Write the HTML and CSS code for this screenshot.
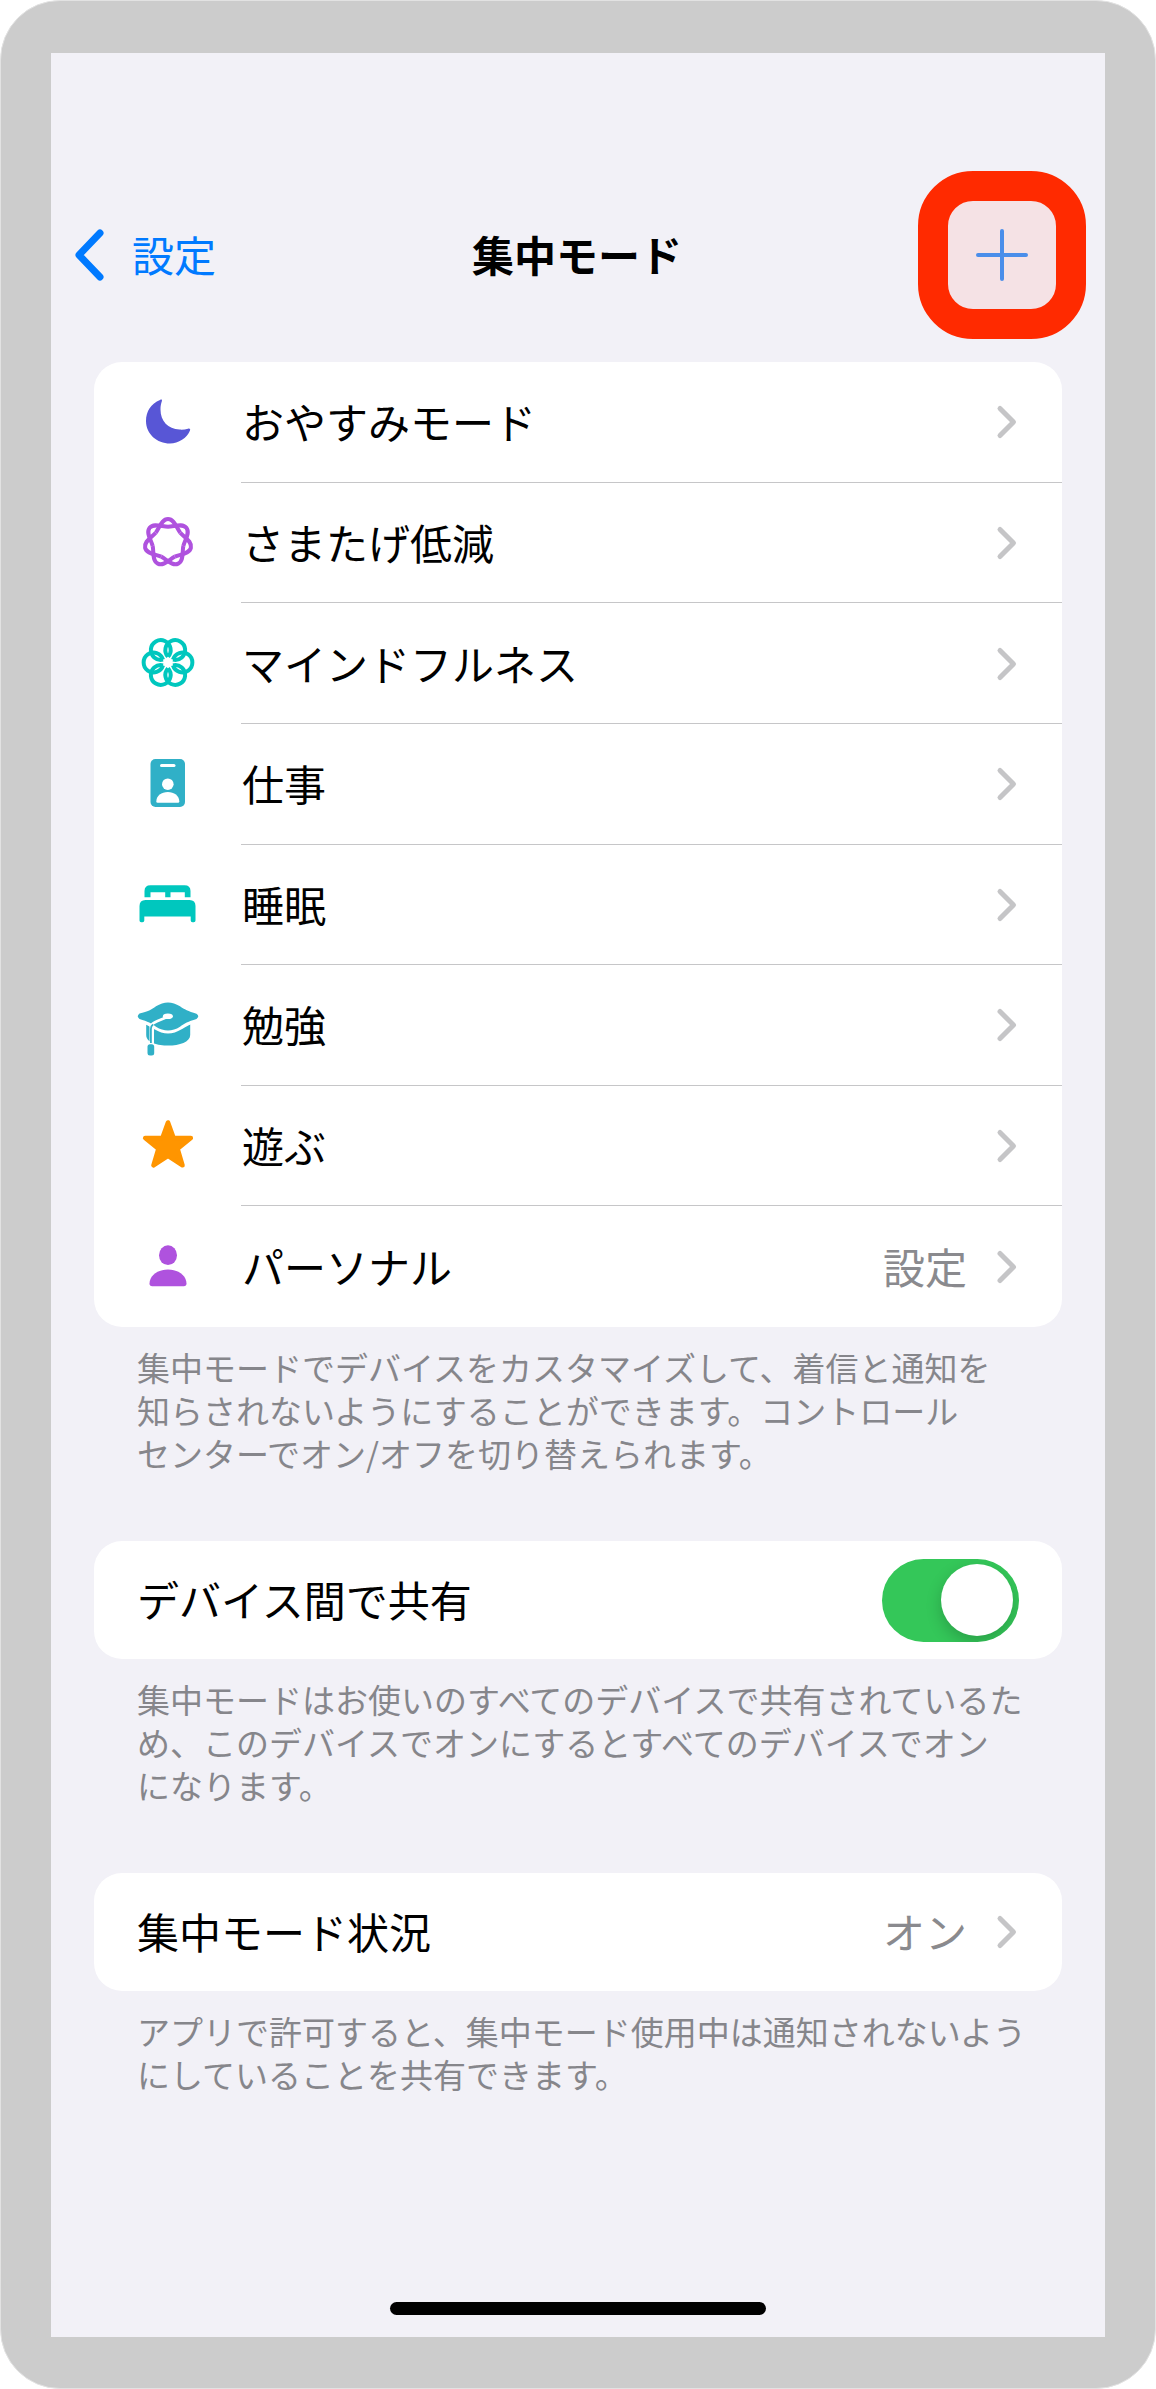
FILE: index.html
```html
<!DOCTYPE html>
<html lang="ja">
<head>
<meta charset="utf-8">
<meta name="viewport" content="width=device-width, initial-scale=1">
<title>集中モード</title>
<link rel="stylesheet" href="styles.css">
</head>
<body>
<svg class="defs" aria-hidden="true">
  <symbol id="chevron" viewBox="0 0 24 36">
    <path d="M5 4.500L18.500 18L5 31.500" fill="none" stroke="currentColor" stroke-width="5" stroke-linecap="round" stroke-linejoin="round"/>
  </symbol>
</svg>
<div class="device">
  <div class="screen">
    <header class="nav">
      <a class="back" href="#settings">
        <svg class="back-icon" viewBox="0 0 30 52" aria-hidden="true"><path d="M26 4L5 26L26 48" fill="none" stroke="currentColor" stroke-width="7" stroke-linecap="round" stroke-linejoin="round"/></svg>
        <span class="text">設定</span>
      </a>
      <h1 class="title text">集中モード</h1>
      <button class="add" type="button" aria-label="追加">
        <svg class="add-icon" viewBox="0 0 52 52" aria-hidden="true"><path d="M26 2V50M2 26H50" fill="none" stroke="currentColor" stroke-width="4" stroke-linecap="round"/></svg>
      </button>
    </header>

    <main class="content">
      <section class="section">
        <ul class="card modes">
          <li class="mode"><a class="row" href="#sleep-mode">
            <svg class="icon indigo" viewBox="0 0 64 64" aria-hidden="true"><path d="M24 10C15 13.500 10 21.500 10 31C10 44 21 53.500 34 53.500C42.500 53.500 51 48 54 40.500C54.600 38.900 53.600 38.200 52 38.700C49.500 39.500 46.500 39.800 43.500 39.600C32 39 24.500 31 24.500 19.500C24.500 16 25 13.500 25.900 11C26.300 9.400 25.300 9.200 24 10Z"/></svg>
            <span class="label text">おやすみモード</span>
            <svg class="chevron"><use href="#chevron"/></svg>
          </a></li>
          <li class="mode"><a class="row" href="#reduce">
            <svg class="icon purple" viewBox="0 0 64 64" aria-hidden="true">
              <g transform="translate(32 31.500)" class="line">
                <path d="M-12.300 -9.800C-8.600 -14.500 -6.500 -23.500 0 -23.500C6.500 -23.500 8.600 -14.500 12.300 -9.800"/>
                <path d="M-12.300 -9.800C-8.600 -14.500 -6.500 -23.500 0 -23.500C6.500 -23.500 8.600 -14.500 12.300 -9.800" transform="rotate(51.430)"/>
                <path d="M-12.300 -9.800C-8.600 -14.500 -6.500 -23.500 0 -23.500C6.500 -23.500 8.600 -14.500 12.300 -9.800" transform="rotate(102.860)"/>
                <path d="M-12.300 -9.800C-8.600 -14.500 -6.500 -23.500 0 -23.500C6.500 -23.500 8.600 -14.500 12.300 -9.800" transform="rotate(154.290)"/>
                <path d="M-12.300 -9.800C-8.600 -14.500 -6.500 -23.500 0 -23.500C6.500 -23.500 8.600 -14.500 12.300 -9.800" transform="rotate(205.710)"/>
                <path d="M-12.300 -9.800C-8.600 -14.500 -6.500 -23.500 0 -23.500C6.500 -23.500 8.600 -14.500 12.300 -9.800" transform="rotate(257.140)"/>
                <path d="M-12.300 -9.800C-8.600 -14.500 -6.500 -23.500 0 -23.500C6.500 -23.500 8.600 -14.500 12.300 -9.800" transform="rotate(308.570)"/>
              </g>
            </svg>
            <span class="label text">さまたげ低減</span>
            <svg class="chevron"><use href="#chevron"/></svg>
          </a></li>
          <li class="mode"><a class="row" href="#mindfulness">
            <svg class="icon mint" viewBox="0 0 64 64" aria-hidden="true">
              <g transform="translate(32 30.500)" class="line">
                <path d="M-2.900 -5A9.900 9.900 0 1 1 2.900 -5" transform="rotate(30)"/>
                <path d="M-2.900 -5A9.900 9.900 0 1 1 2.900 -5" transform="rotate(90)"/>
                <path d="M-2.900 -5A9.900 9.900 0 1 1 2.900 -5" transform="rotate(150)"/>
                <path d="M-2.900 -5A9.900 9.900 0 1 1 2.900 -5" transform="rotate(210)"/>
                <path d="M-2.900 -5A9.900 9.900 0 1 1 2.900 -5" transform="rotate(270)"/>
                <path d="M-2.900 -5A9.900 9.900 0 1 1 2.900 -5" transform="rotate(330)"/>
              </g>
            </svg>
            <span class="label text">マインドフルネス</span>
            <svg class="chevron"><use href="#chevron"/></svg>
          </a></li>
          <li class="mode"><a class="row" href="#work">
            <svg class="icon teal" viewBox="0 0 64 64" aria-hidden="true">
              <rect x="14.500" y="7" width="34.500" height="48" rx="5"/>
              <g fill="#fff"><rect x="24" y="12" width="15.500" height="3" rx="1.500"/><circle cx="31.800" cy="32.200" r="5.800"/><path d="M20.300 49.500C20.300 43.500 25.500 39.900 31.800 39.900S43.300 43.500 43.300 49.500Q43.300 50.800 42 50.800H21.600Q20.300 50.800 20.300 49.500Z"/></g>
            </svg>
            <span class="label text">仕事</span>
            <svg class="chevron"><use href="#chevron"/></svg>
          </a></li>
          <li class="mode"><a class="row" href="#sleep">
            <svg class="icon mint" viewBox="0 0 64 64" aria-hidden="true">
              <path d="M8.500 24.200V18Q8.500 12.200 14.500 12.200H48.500Q54.500 12.200 54.500 18V24.200H48.800V19.200H34.500V24.200H29.200V19.200H14.500V24.200Z"/>
              <path d="M9.500 26.900H53.500Q59.500 26.900 59.500 33V47.500Q59.500 49.300 57.800 49.300H56.500Q54.700 49.300 54.700 47.500V43.500H8.300V47.500Q8.300 49.300 6.500 49.300H5.200Q3.500 49.300 3.500 47.500V33Q3.500 26.900 9.500 26.900Z"/>
            </svg>
            <span class="label text">睡眠</span>
            <svg class="chevron"><use href="#chevron"/></svg>
          </a></li>
          <li class="mode"><a class="row" href="#study">
            <svg class="icon teal" viewBox="0 0 64 64" aria-hidden="true">
              <path d="M10.200 28H54.200V42C54.200 49 43.500 52.600 32 52.600C22 52.600 10.200 50 10.200 42Z"/>
              <path d="M13.500 32H18V54H13.500Z" fill="#fff"/>
              <path d="M3.500 20.500C12 18.500 15.500 16.500 20 13.200Q32 5.600 44 13.200C48.500 16.500 52 18 60.500 20.700Q64 23.300 60.500 26C52 28.500 48.500 30.500 44 33.800Q32 41.300 20 33.800C15.500 30.500 12 28.500 3.500 26Q0 23.300 3.500 20.500Z" stroke="#fff" stroke-width="6" paint-order="stroke"/>
              <path d="M30 24.500L21 28.200Q16 30.300 14.500 33" fill="none" stroke="#fff" stroke-width="2.600"/>
              <ellipse cx="31.900" cy="23.300" rx="5" ry="2.800" fill="#fff"/>
              <path d="M17 31.500Q14.900 33 14.900 36V53" fill="none" stroke="currentColor" stroke-width="1.800"/>
              <rect x="10.500" y="50" width="8.700" height="14" rx="4" fill="#fff"/>
              <rect x="11.500" y="51.300" width="6.700" height="11.300" rx="2.500"/>
            </svg>
            <span class="label text">勉強</span>
            <svg class="chevron"><use href="#chevron"/></svg>
          </a></li>
          <li class="mode"><a class="row" href="#play">
            <svg class="icon orange" viewBox="0 0 64 64" aria-hidden="true"><path d="M32 8.500L37.600 24H54.800L41.600 34.800L46.500 51.300L32 41.800L17.500 51.300L22.400 34.800L9.200 24H26.400Z" stroke="currentColor" stroke-width="4.600" stroke-linejoin="round"/></svg>
            <span class="label text">遊ぶ</span>
            <svg class="chevron"><use href="#chevron"/></svg>
          </a></li>
          <li class="mode"><a class="row" href="#personal">
            <svg class="icon purple" viewBox="0 0 64 64" aria-hidden="true"><ellipse cx="32" cy="20.200" rx="9" ry="9.900"/><path d="M13.500 48.500C13.500 41 21 34.600 32 34.600S50.500 41 50.500 48.500Q50.500 51.300 47.800 51.300H16.200Q13.500 51.300 13.500 48.500Z"/></svg>
            <span class="label text">パーソナル</span>
            <span class="value text">設定</span>
            <svg class="chevron"><use href="#chevron"/></svg>
          </a></li>
        </ul>
        <p class="note">集中モードでデバイスをカスタマイズして、着信と通知を<br>知らされないようにすることができます。コントロール<br>センターでオン/オフを切り替えられます。</p>
      </section>

      <section class="section">
        <div class="card plain">
          <label class="label text" for="share">デバイス間で共有</label>
          <input class="switch" id="share" type="checkbox" role="switch" checked>
        </div>
        <p class="note">集中モードはお使いのすべてのデバイスで共有されているた<br>め、このデバイスでオンにするとすべてのデバイスでオン<br>になります。</p>
      </section>

      <section class="section">
        <a class="card plain" href="#status">
          <span class="label text">集中モード状況</span>
          <span class="value text">オン</span>
          <svg class="chevron"><use href="#chevron"/></svg>
        </a>
        <p class="note">アプリで許可すると、集中モード使用中は通知されないよう<br>にしていることを共有できます。</p>
      </section>
    </main>
    <div class="home-bar"></div>
  </div>
</div>
</body>
</html>
```
FILE: styles.css
```css
* {
  box-sizing: border-box;
}

body {
  margin: 0;
  background: #fff;
  color: #000;
  font-family: "Noto Sans CJK JP", "Liberation Sans", sans-serif;
  font-size: 42px;
  line-height: 60px;
}

a {
  color: inherit;
  text-decoration: none;
}

.defs {
  display: none;
}

.device {
  display: flex;
  min-height: 100vh;
  padding: 52px 50px 51px;
  border: 1px solid #e2e2e2;
  border-radius: 60px;
  background: #ccc;
}

.screen {
  flex: 1;
  display: flex;
  flex-direction: column;
  padding-top: 118px;
  background: #f2f1f7;
}

.nav {
  display: grid;
  grid-template-columns: 1fr auto 1fr;
  align-items: center;
  padding: 0 19px 0 17px;
}

.back {
  display: flex;
  align-items: center;
  gap: 28px;
  padding-left: 6px;
  color: #007aff;
}

.back-icon {
  width: 30px;
  height: 52px;
}

.title {
  margin: 0;
  font-size: 42px;
  font-weight: 700;
}

.text {
  padding-bottom: 2px;
}

.add {
  justify-self: end;
  display: grid;
  place-items: center;
  width: 168px;
  height: 168px;
  padding: 0;
  border: 30px solid #ff2a00;
  border-radius: 55px;
  background: #f5e2e5;
  color: #4a8eea;
}

.add-icon {
  width: 52px;
  height: 52px;
}

.content {
  display: flex;
  flex-direction: column;
  gap: 66px;
  padding: 23px 43px 0;
}

.card {
  margin: 0;
  padding: 0;
  border-radius: 28px;
  background: #fff;
  overflow: hidden;
}

.modes {
  display: grid;
  grid-auto-rows: 1fr;
  min-height: 965px;
  list-style: none;
}

.mode {
  display: grid;
}

.row {
  display: flex;
  align-items: center;
  padding-right: 43px;
  background: linear-gradient(#c6c6c8, #c6c6c8) no-repeat 147px 100% / 100% 1px;
}

.mode:last-child .row {
  background: none;
}

.icon {
  flex: none;
  width: 64px;
  height: 64px;
  margin: 0 42px;
  fill: currentColor;
}

.line {
  fill: none;
  stroke: currentColor;
  stroke-width: 4;
}

.indigo { color: #5856d6; }
.purple { color: #af52de; }
.mint { color: #00c7be; }
.teal { color: #30b0c7; }
.orange { color: #ff9500; }

.label {
  flex: 1;
}

.value {
  margin-right: 28px;
  color: #8a8a8e;
}

.chevron {
  flex: none;
  width: 24px;
  height: 36px;
  color: #c5c5c7;
}

.plain {
  display: flex;
  align-items: center;
  min-height: 118px;
  padding: 0 43px;
}

.switch {
  appearance: none;
  display: flex;
  align-items: center;
  width: 137px;
  height: 83px;
  margin: 0;
  padding: 0 6px;
  border-radius: 42px;
  background: #e9e9ea;
  overflow: hidden;
}

.switch::before {
  content: "";
  width: 72px;
  height: 72px;
  border-radius: 50%;
  background: #fff;
  box-shadow: 0 6px 16px rgba(0, 0, 0, 0.2);
}

.switch:checked {
  justify-content: flex-end;
  background: #34c759;
}

.note {
  margin: 19px 0 0;
  padding-left: 43px;
  color: #86868b;
  font-size: 33px;
  line-height: 43px;
}

.home-bar {
  width: 376px;
  max-width: 60%;
  height: 13px;
  margin: auto auto 22px;
  border-radius: 7px;
  background: #000;
}
```
